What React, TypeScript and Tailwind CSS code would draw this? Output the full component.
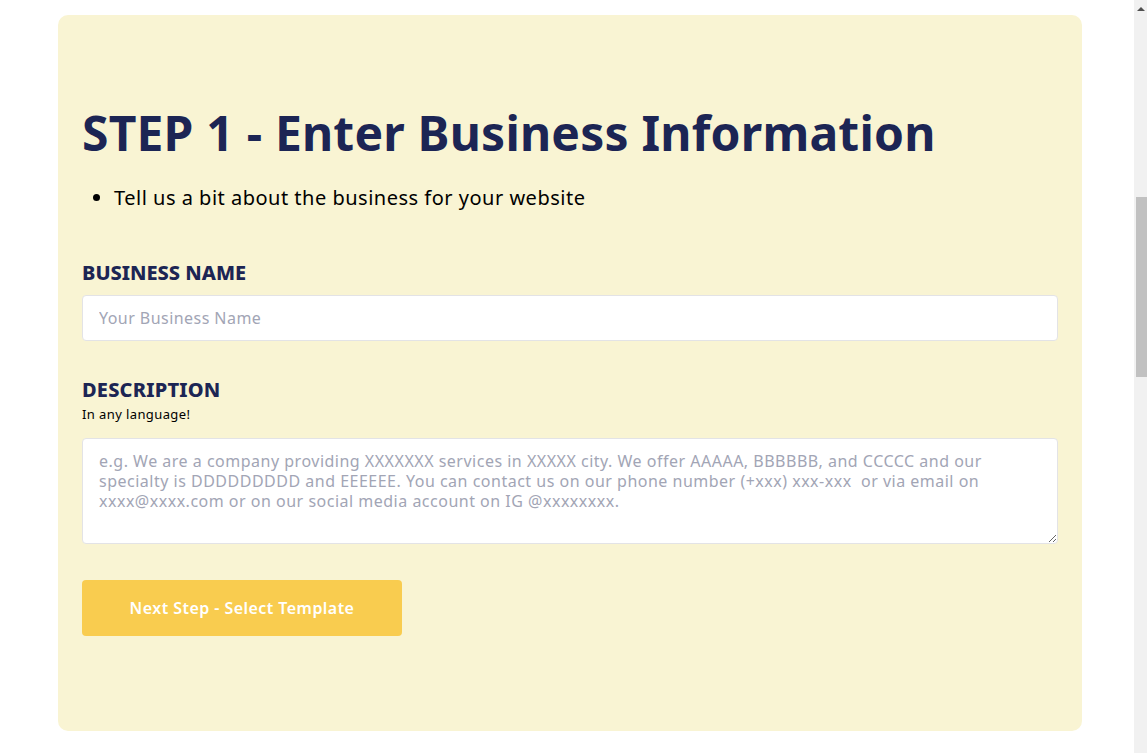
export default function App() {
  const descPlaceholder =
    "e.g. We are a company providing XXXXXXX services in XXXXX city. We offer AAAAA, BBBBBB, and CCCCC and our\nspecialty is DDDDDDDDD and EEEEEE. You can contact us on our phone number (+xxx) xxx-xxx  or via email on\nxxxx@xxxx.com or on our social media account on IG @xxxxxxxx.";

  return (
    <div className="flex h-[753px] w-full overflow-hidden bg-white font-['Noto_Sans',sans-serif]">
      {/* Page */}
      <div className="flex-1 pt-[15px]">
        <div className="ml-[58px] w-[1024px] rounded-[10px] bg-[#f9f4d3] px-6 pt-[89px] pb-[95px]">
          <h1 className="text-[48px] leading-[1.2] font-bold tracking-[0.2px] text-[#1c2554]">
            STEP 1 - Enter Business Information
          </h1>
          <ul className="mt-[22px] list-disc pl-8 text-[20px] leading-7 tracking-[0.5px] text-black">
            <li>Tell us a bit about the business for your website</li>
          </ul>

          {/* Business name */}
          <label className="mt-[47px] block text-[20px] leading-7 font-extrabold text-[#1c2554]">
            BUSINESS NAME
          </label>
          <input
            type="text"
            placeholder="Your Business Name"
            className="mt-2 block h-[46px] w-full rounded border border-[#e3e3e6] bg-white px-4 text-[16px] tracking-[0.45px] text-black outline-none placeholder:text-[#a2a5b5]"
          />

          {/* Description */}
          <label className="mt-[35px] block text-[20px] leading-7 font-extrabold tracking-[0.2px] text-[#1c2554]">
            DESCRIPTION
          </label>
          <p className="mt-0.5 text-[13px] leading-4 tracking-[0.4px] text-black">In any language!</p>
          <textarea
            placeholder={descPlaceholder}
            className="mt-4 block h-[106px] w-full rounded border border-[#e3e3e6] bg-white px-4 py-3 text-[16px] leading-5 tracking-[0.5px] text-black outline-none placeholder:text-[#a2a5b5]"
          />

          <button className="mt-9 flex h-14 w-80 items-center justify-center rounded bg-[#f9cc4f] text-[16px] font-semibold tracking-[0.45px] text-white">
            Next Step - Select Template
          </button>
        </div>
      </div>

      {/* Scrollbar */}
      <div className="flex w-[13px] flex-col items-end bg-[#f1f1f1]">
        <div className="flex h-[17px] w-full items-center justify-center">
          <div className="h-0 w-0 border-x-[4px] border-b-[4px] border-x-transparent border-b-[#505050]" />
        </div>
        <div className="mt-[180px] h-[180px] w-[11px] bg-[#c1c1c1]" />
      </div>
    </div>
  );
}
